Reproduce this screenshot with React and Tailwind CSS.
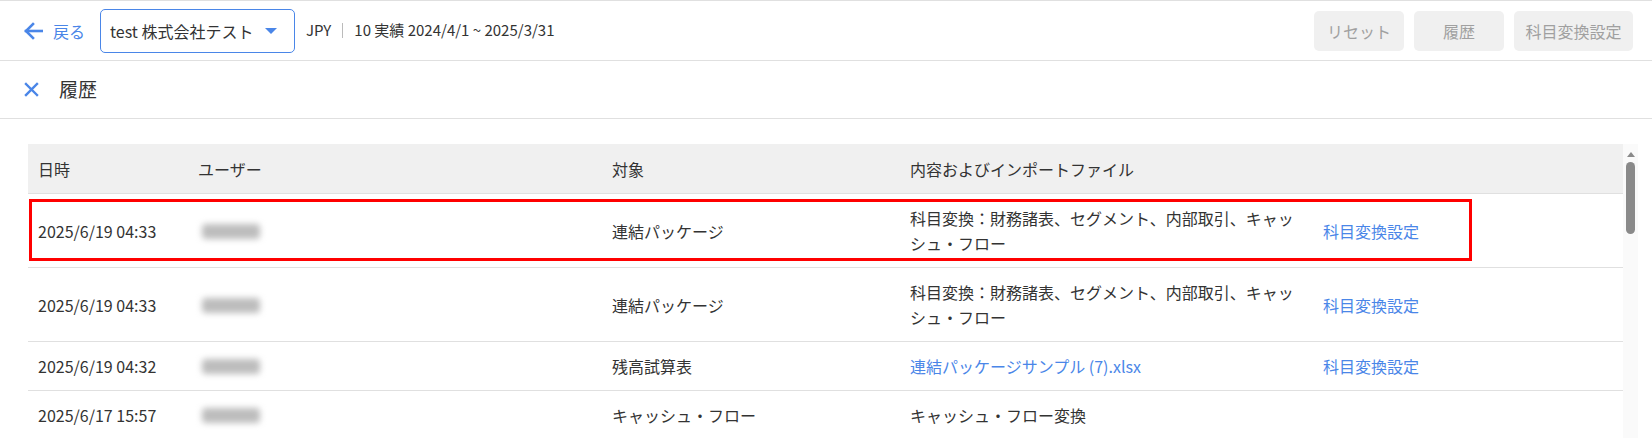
import React from 'react';

// 履歴 history table screen
const rows = [
  {
    date: '2025/6/19 04:33',
    target: '連結パッケージ',
    content: '科目変換：財務諸表、セグメント、内部取引、キャッシュ・フロー',
    link: '科目変換設定',
    highlight: true,
  },
  {
    date: '2025/6/19 04:33',
    target: '連結パッケージ',
    content: '科目変換：財務諸表、セグメント、内部取引、キャッシュ・フロー',
    link: '科目変換設定',
  },
  {
    date: '2025/6/19 04:32',
    target: '残高試算表',
    file: '連結パッケージサンプル (7).xlsx',
    link: '科目変換設定',
  },
  {
    date: '2025/6/17 15:57',
    target: 'キャッシュ・フロー',
    content: 'キャッシュ・フロー変換',
  },
];

const cols = 'grid grid-cols-[160px_414px_298px_413px_1fr]';

function BlurredName() {
  return (
    <div className="flex items-center h-[25px]">
      <div className="w-[58px] h-[15px] ml-[4px] bg-[#bdbdbd] blur-[3px] rounded-sm" />
    </div>
  );
}

function App() {
  return (
    <div className="w-[1652px] h-[438px] overflow-hidden bg-white text-[#333] font-['Noto_Sans_CJK_JP','Noto_Sans',sans-serif]">
      {/* top bar */}
      <div className="h-[61px] border-t border-b border-[#e0e0e0] flex items-center pl-[23px] pr-[19px]">
        <svg width="20" height="18" viewBox="0 0 20 18" fill="none" stroke="#4a86e8" strokeWidth="2.6" strokeLinecap="square">
          <path d="M3 9h16" />
          <path d="M10 2 3 9l7 7" />
        </svg>
        <span className="ml-[10px] text-[16px] text-[#4a86e8]">戻る</span>
        <div className="ml-[15px] w-[195px] h-[44px] border border-[#4a86e8] rounded-[5px] flex items-center pl-[9px] pr-[17px]">
          <span className="text-[16px] text-[#333] flex-1">test 株式会社テスト</span>
          <span className="w-0 h-0 border-l-[6px] border-r-[6px] border-t-[6px] border-l-transparent border-r-transparent border-t-[#4a86e8]" />
        </div>
        <div className="ml-[11px] text-[15px] text-[#333] flex items-center">
          <span>JPY</span>
          <span className="mx-[11px] w-px h-[15px] bg-[#bbb]" />
          <span>10 実績 2024/4/1 ~ 2025/3/31</span>
        </div>
        <div className="ml-auto flex gap-[10px]">
          <button className="w-[90px] h-[40px] rounded-[5px] bg-[#f0f0f0] text-[#a0a0a0] text-[16px]">リセット</button>
          <button className="w-[90px] h-[40px] rounded-[5px] bg-[#f0f0f0] text-[#a0a0a0] text-[16px]">履歴</button>
          <button className="w-[119px] h-[40px] rounded-[5px] bg-[#f0f0f0] text-[#a0a0a0] text-[16px]">科目変換設定</button>
        </div>
      </div>

      {/* title bar */}
      <div className="h-[58px] border-b border-[#e0e0e0] flex items-center pl-[24px]">
        <svg width="15" height="15" viewBox="0 0 15 15" stroke="#4a86e8" strokeWidth="2.4" strokeLinecap="square">
          <path d="M2 2l11 11M13 2 2 13" />
        </svg>
        <span className="ml-[20px] text-[19px] text-[#333]">履歴</span>
      </div>

      {/* table + scrollbar */}
      <div className="mt-[25px] ml-[28px] mr-[14px] flex">
        <div className="flex-1 text-[16px]">
          <div className={`${cols} h-[50px] items-center bg-[#f0f0f0] border-b border-[#e0e0e0]`}>
            <div className="px-[10px]">日時</div>
            <div className="px-[10px]">ユーザー</div>
            <div className="px-[10px]">対象</div>
            <div className="px-[10px]">内容およびインポートファイル</div>
            <div />
          </div>
          {rows.map((r, i) => (
            <div key={i} className={`${cols} relative items-center leading-[25px] pt-[12px] pb-[11px] border-b border-[#e0e0e0]`}>
              <div className="px-[10px]">{r.date}</div>
              <div className="px-[10px]"><BlurredName /></div>
              <div className="px-[10px]">{r.target}</div>
              <div className="pl-[10px]">
                {r.file ? (
                  <span className="text-[#4a86e8]">{r.file}</span>
                ) : (
                  <div className="max-w-[396px]">{r.content}</div>
                )}
              </div>
              <div className="px-[10px] text-[#4a86e8]">{r.link}</div>
              {r.highlight && (
                <span className="absolute left-[1px] top-[5px] w-[1443px] h-[62px] border-[3px] border-[#ff0000] pointer-events-none" />
              )}
            </div>
          ))}
        </div>
        <div className="w-[15px] bg-[#fafafa] flex flex-col items-center">
          <span className="mt-[8px] w-0 h-0 border-l-[4px] border-r-[4px] border-b-[5px] border-l-transparent border-r-transparent border-b-[#8a8a8a]" />
          <span className="mt-[5px] w-[9px] h-[72px] rounded-full bg-[#8a8a8a]" />
        </div>
      </div>
    </div>
  );
}

export default App;
